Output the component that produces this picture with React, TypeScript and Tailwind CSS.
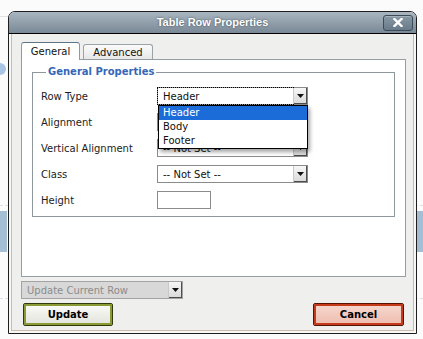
import { ReactNode } from 'react'

const ui = "font-['DejaVu_Sans',Verdana,sans-serif]"

function Arrow() {
  return (
    <div className="flex w-[14px] shrink-0 items-center justify-center border-l border-l-[#c9c9c9] bg-gradient-to-b from-[#f7f7f7] to-[#d9d9d9] shadow-[inset_-1px_-1px_0_#4d4d4d]">
      <svg width="7" height="4" viewBox="0 0 7 4">
        <polygon points="0,0 7,0 3.5,4" fill="#111" />
      </svg>
    </div>
  )
}

interface SelectProps {
  value: string
  focused?: boolean
  open?: boolean
}

function Select({ value, focused, open }: SelectProps) {
  return (
    <div className="relative flex h-[18px] w-[151px] border border-[#8b8b8b] bg-white">
      <div
        className={`flex flex-1 items-center pl-[5px] text-[#111] ${
          focused ? 'outline outline-dotted outline-black' : ''
        }`}
      >
        {value}
      </div>
      <Arrow />
      {open && (
        <div className="absolute left-0 top-[17px] z-20 w-[150px] border border-black bg-white shadow-[2px_3px_4px_rgba(0,0,0,0.35)]">
          <div className="h-[14px] bg-[#1b6bd8] pl-[4px] leading-[14px] text-white">Header</div>
          <div className="h-[14px] pl-[4px] leading-[14px] text-[#111]">Body</div>
          <div className="h-[14px] pl-[4px] leading-[14px] text-[#111]">Footer</div>
        </div>
      )}
    </div>
  )
}

function Row({ label, children }: { label: string; children: ReactNode }) {
  return (
    <div className="flex h-[26px] items-center">
      <div className="w-[116px] text-[#1c1c1c]">{label}</div>
      {children}
    </div>
  )
}

export default function App() {
  return (
    <div className={`relative h-[339px] w-[423px] overflow-hidden bg-[#fbfbfc] ${ui} text-[10px]`}>
      {/* page behind the dialog */}
      <div className="flex flex-col">
        <div className="mt-[16px] h-[1px] w-[12px] bg-[#dfe3e8]" />
        <div className="ml-[-6px] mt-[46px] h-[12px] w-[12px] rounded-full bg-[#a8c5e4]" />
        <div className="mt-[130px] h-[1px] w-full border-t border-dashed border-[#dde1e6]" />
        <div className="mt-[5px] flex justify-between">
          <div className="h-[41px] w-[7px] bg-[#a3bed5]" />
          <div className="h-[41px] w-[7px] bg-[#a3bed5]" />
        </div>
        <div className="mt-[46px] h-[1px] w-full border-t border-dashed border-[#dde1e6]" />
      </div>

      {/* dialog */}
      <div className="absolute left-[8px] top-[11px] flex h-[323px] w-[409px] flex-col rounded-t-[7px] border border-[#1e1e1e] bg-[#f7f7f6]">
        <div className="grid h-[22px] grid-cols-[1fr_auto_1fr] items-center rounded-t-[6px] border-b border-black bg-gradient-to-b from-[#a9b6c0] to-[#7a8996]">
          <div />
          <div className="font-['Liberation_Sans',Arial,sans-serif] text-[11px] font-bold text-white [text-shadow:0_0_2px_#3b4650]">
            Table Row Properties
          </div>
          <div className="flex justify-end pr-[3px]">
            <div className="flex h-[16px] w-[30px] items-center justify-center rounded-[3px] border border-[#3d4b57] bg-gradient-to-b from-[#8898a5] to-[#687a89] shadow-[inset_0_1px_0_#a3b1bc]">
              <svg width="10" height="9" viewBox="0 0 10 9">
                <path d="M1.5 1 L8.5 8 M8.5 1 L1.5 8" stroke="#fff" strokeWidth="2.4" strokeLinecap="square" />
              </svg>
            </div>
          </div>
        </div>

        <div className="flex flex-1 flex-col px-[2px] pb-[2px]">
          <div className="flex flex-1 flex-col border border-t-0 border-[#cdb9ad] bg-[#efefed] pb-[4px] pl-[9px] pr-[7px] pt-[8px]">
            {/* tabs */}
            <div className="relative z-10 flex h-[17px] items-end gap-[3px]">
              <div className="mb-[-1px] flex h-[18px] w-[59px] items-center justify-center rounded-t-[3px] border border-b-0 border-[#8f9aa0] border-t-[#5d7486] bg-white text-[#111]">
                General
              </div>
              <div className="flex h-[15px] w-[70px] items-center justify-center rounded-t-[3px] border border-b-0 border-[#9aa4a8] bg-gradient-to-b from-[#fbfbfb] to-[#e7e7e7] text-[#111]">
                Advanced
              </div>
            </div>

            {/* tab panel */}
            <div className="h-[218px] border border-[#959fa3] bg-white px-[10px] pt-[6px]">
              <fieldset className="border border-[#8e979b] pb-[3px] pl-[8px] pt-[5px]">
                <legend className="ml-[5px] px-[2px] text-[10px] font-bold leading-[12px] text-[#3567b8]">
                  General Properties
                </legend>
                <Row label="Row Type">
                  <Select value="Header" focused open />
                </Row>
                <Row label="Alignment">
                  <Select value="-- Not Set --" />
                </Row>
                <Row label="Vertical Alignment">
                  <Select value="-- Not Set --" />
                </Row>
                <Row label="Class">
                  <Select value="-- Not Set --" />
                </Row>
                <Row label="Height">
                  <div className="h-[18px] w-[54px] border border-[#8b8b8b] bg-white" />
                </Row>
              </fieldset>
            </div>

            {/* action scope */}
            <div className="mt-[4px] flex h-[18px] w-[162px] border border-[#a3a3a3] bg-[#d8d8d8]">
              <div className="flex flex-1 items-center pl-[5px] text-[#8c8c8c]">Update Current Row</div>
              <Arrow />
            </div>

            {/* buttons */}
            <div className="mt-[4px] flex justify-between px-[2px]">
              <button className="flex h-[23px] w-[90px] items-center justify-center rounded-[2px] border border-[#2f3a0e] bg-gradient-to-b from-[#fbfbf8] to-[#e3e3dc] font-bold text-black shadow-[inset_0_0_0_2px_#8a9b36]">
                Update
              </button>
              <button className="flex h-[23px] w-[91px] items-center justify-center rounded-[2px] border border-[#561405] bg-gradient-to-b from-[#f6d8cf] to-[#eebcae] font-bold text-black shadow-[inset_0_0_0_2px_#c43a1b]">
                Cancel
              </button>
            </div>
          </div>
        </div>
      </div>
    </div>
  )
}
